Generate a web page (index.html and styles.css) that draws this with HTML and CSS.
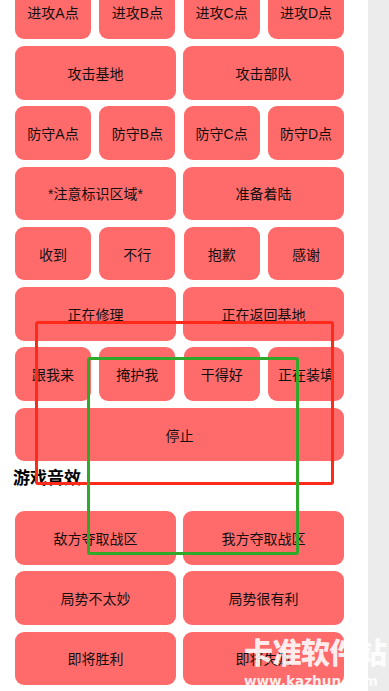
FILE: index.html
```html
<!DOCTYPE html>
<html lang="zh">
<head>
<meta charset="utf-8">
<title>快捷语音</title>
<link rel="stylesheet" href="styles.css">
</head>
<body>
<div class="page">
  <main class="main">
    <div class="grid">
      <div class="row four">
        <div class="btn">进攻A点</div><div class="btn">进攻B点</div><div class="btn">进攻C点</div><div class="btn">进攻D点</div>
      </div>
      <div class="row two">
        <div class="btn">攻击基地</div><div class="btn">攻击部队</div>
      </div>
      <div class="row four">
        <div class="btn">防守A点</div><div class="btn">防守B点</div><div class="btn">防守C点</div><div class="btn">防守D点</div>
      </div>
      <div class="row two">
        <div class="btn">*注意标识区域*</div><div class="btn">准备着陆</div>
      </div>
      <div class="row four">
        <div class="btn">收到</div><div class="btn">不行</div><div class="btn">抱歉</div><div class="btn">感谢</div>
      </div>
      <div class="row two">
        <div class="btn">正在修理</div><div class="btn">正在返回基地</div>
      </div>
      <div class="row four">
        <div class="btn">跟我来</div><div class="btn">掩护我</div><div class="btn">干得好</div><div class="btn">正在装填</div>
      </div>
      <div class="row one">
        <div class="btn">停止</div>
      </div>
      <h2 class="section-title">游戏音效</h2>
      <div class="row two">
        <div class="btn">敌方夺取战区</div><div class="btn">我方夺取战区</div>
      </div>
      <div class="row two">
        <div class="btn">局势不太妙</div><div class="btn">局势很有利</div>
      </div>
      <div class="row two">
        <div class="btn">即将胜利</div><div class="btn">即将失败</div>
      </div>
    </div>
  </main>
  <aside class="side"></aside>
  <div class="mark mark-red"></div>
  <div class="mark mark-green"></div>
  <div class="watermark">
    <div class="wm-title">卡准软件站</div>
    <div class="wm-url">www.kazhun.com</div>
  </div>
</div>
</body>
</html>
```
FILE: styles.css
```css
html, body {
  margin: 0;
  padding: 0;
  background: #ffffff;
}
body {
  font-family: "Liberation Sans", "Noto Sans CJK SC", sans-serif;
  overflow: hidden;
}
.page {
  position: relative;
  display: flex;
  width: 389px;
  height: 691px;
  overflow: hidden;
}
.main {
  width: 368px;
  flex: none;
  background: #ffffff;
}
.side {
  flex: 1;
  background: #ececec;
}
.grid {
  margin-top: -14.3px;
  padding-left: 15px;
  width: 329px;
  display: flex;
  flex-direction: column;
  gap: 6.8px;
}
.row {
  display: grid;
  height: 53.5px;
}
.row.four {
  grid-template-columns: repeat(4, 1fr);
  column-gap: 8.3px;
}
.row.two {
  grid-template-columns: repeat(2, 1fr);
  column-gap: 7px;
}
.row.one {
  grid-template-columns: 1fr;
}
.btn {
  background: #ff6b6b;
  border-radius: 9px;
  display: flex;
  align-items: center;
  justify-content: center;
  font-size: 14px;
  color: #141010;
  white-space: nowrap;
}
.section-title {
  margin: 0 0 14.2px 0;
  margin-left: -2px;
  height: 22px;
  line-height: 22px;
  font-size: 17px;
  font-weight: bold;
  color: #000;
}
.mark {
  position: absolute;
  box-sizing: border-box;
  border-radius: 3px;
  pointer-events: none;
}
.mark-red {
  left: 35px;
  top: 321px;
  width: 299px;
  height: 164px;
  border: 3px solid #ff2a1a;
}
.mark-green {
  left: 86.5px;
  top: 356.5px;
  width: 212.5px;
  height: 198.5px;
  border: 3px solid #30a82a;
}
.watermark {
  position: absolute;
  left: 244px;
  top: 632px;
  color: rgba(255, 255, 255, 0.88);
  font-family: "DejaVu Sans", "Noto Sans CJK SC", sans-serif;
  font-weight: bold;
  pointer-events: none;
}
.wm-title {
  font-family: "Noto Sans CJK SC", sans-serif;
  font-size: 29px;
  line-height: 38px;
  font-weight: 900;
  letter-spacing: -0.5px;
}
.wm-url {
  font-size: 13.6px;
  line-height: 18px;
  margin-top: 2px;
}
```
